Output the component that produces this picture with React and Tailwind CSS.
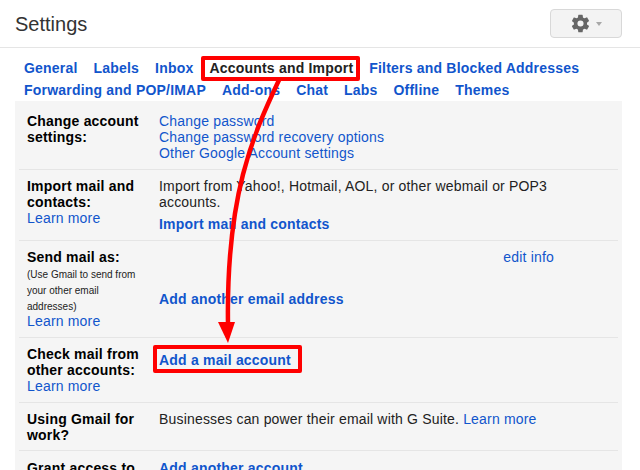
import React from 'react';

const Link = ({ children, className = '' }) => (
  <a className={`text-[#1155cc] tracking-[0.18px] ${className}`}>{children}</a>
);

const Action = ({ children, className = '' }) => (
  <a className={`block font-bold text-[#1155cc] tracking-[0.2px] ${className}`}>{children}</a>
);

const Tab = ({ children, active }) => (
  <a className={`font-bold tracking-[0.2px] ${active ? 'text-[#222222]' : 'text-[#1155cc]'}`}>{children}</a>
);

const Row = ({ label, children, className = '', last }) => (
  <div className={`flex mx-1 px-2 ${last ? '' : 'border-b border-[#e5e5e5]'} ${className}`}>
    <div className="w-[132px] shrink-0 pr-2">{label}</div>
    <div className="flex-1 min-w-0">{children}</div>
  </div>
);

const Label = ({ children }) => (
  <div className="font-bold text-black tracking-[0.2px]">{children}</div>
);

export default function App() {
  return (
    <div className="relative w-[640px] h-[470px] overflow-hidden bg-white text-[14px] leading-4 text-[#222222] font-['Liberation_Sans',Arial,sans-serif]">
      <header className="flex items-center justify-between h-12 pl-[15px] pr-[18px] border-b border-[#e5e5e5]">
        <h1 className="text-[20px] leading-6 font-normal text-[#333333]">Settings</h1>
        <button className="flex items-center justify-center gap-[5px] w-[72px] h-[29px] rounded-sm border border-[#d8d8d8] bg-[#f3f3f3]">
          <svg width="21" height="21" viewBox="0 0 24 24" className="text-[#666666]" fill="currentColor">
            <path fillRule="evenodd" d="M19.4 13c.04-.33.06-.66.06-1s-.02-.67-.06-1l2.1-1.65c.2-.15.25-.42.12-.64l-2-3.46c-.12-.22-.39-.3-.61-.22l-2.49 1a7.3 7.3 0 0 0-1.69-.98l-.38-2.65A.49.49 0 0 0 13.96 2h-4a.49.49 0 0 0-.49.42l-.38 2.65c-.61.25-1.17.59-1.69.98l-2.49-1a.49.49 0 0 0-.61.22l-2 3.46c-.13.22-.07.49.12.64L4.52 11c-.04.33-.07.67-.07 1s.03.67.07 1l-2.11 1.65c-.19.15-.25.42-.12.64l2 3.46c.12.22.39.3.61.22l2.49-1c.52.4 1.08.73 1.69.98l.38 2.65c.03.24.24.42.49.42h4c.25 0 .46-.18.49-.42l.38-2.65c.61-.25 1.17-.59 1.69-.98l2.49 1c.22.08.49 0 .61-.22l2-3.46c.13-.22.07-.49-.12-.64L19.4 13zM12 15.5a3.5 3.5 0 1 1 0-7 3.5 3.5 0 0 1 0 7z" />
          </svg>
          <span className="w-0 h-0 border-x-[3.5px] border-x-transparent border-t-[4px] border-t-[#a8a8a8]" />
        </button>
      </header>

      <nav className="pl-6 pt-[9px]">
        <div className="flex gap-4 h-[22px] items-center">
          <Tab>General</Tab>
          <Tab>Labels</Tab>
          <Tab>Inbox</Tab>
          <Tab active>Accounts and Import</Tab>
          <Tab>Filters and Blocked Addresses</Tab>
        </div>
        <div className="flex gap-4 h-[22px] items-center">
          <Tab>Forwarding and POP/IMAP</Tab>
          <Tab>Add-ons</Tab>
          <Tab>Chat</Tab>
          <Tab>Labs</Tab>
          <Tab>Offline</Tab>
          <Tab>Themes</Tab>
        </div>
      </nav>

      <main className="ml-[15px] w-[607px] bg-[#f5f5f5] h-[400px]">
        <Row className="h-[69px] pt-3" label={<Label>Change account settings:</Label>}>
          <Link className="block">Change password</Link>
          <Link className="block">Change password recovery options</Link>
          <Link className="block">Other Google Account settings</Link>
        </Row>
        <Row
          className="h-[71px] pt-2"
          label={
            <>
              <Label>Import mail and contacts:</Label>
              <Link>Learn more</Link>
            </>
          }
        >
          <p className="tracking-[0.18px] text-[#222222]">Import from Yahoo!, Hotmail, AOL, or other webmail or POP3 accounts.</p>
          <Action className="mt-[6px]">Import mail and contacts</Action>
        </Row>
        <Row
          className="h-[97px] pt-2"
          label={
            <>
              <Label>Send mail as:</Label>
              <p className="mt-[2px] max-w-[115px] text-[10px] leading-4 text-[#222222]">(Use Gmail to send from your other email addresses)</p>
              <Link className="block -mt-[2px]">Learn more</Link>
            </>
          }
        >
          <div className="flex justify-end pr-[56px] h-[42px]">
            <Link>edit info</Link>
          </div>
          <Action>Add another email address</Action>
        </Row>
        <Row
          className="h-[65px] pt-2"
          label={
            <>
              <Label>Check mail from other accounts:</Label>
              <Link>Learn more</Link>
            </>
          }
        >
          <Action className="mt-[6px]">Add a mail account</Action>
        </Row>
        <Row className="h-[48px] pt-2" label={<Label>Using Gmail for work?</Label>}>
          <p className="tracking-[0.18px]">
            Businesses can power their email with G Suite. <Link>Learn more</Link>
          </p>
        </Row>
        <Row className="pt-[9px]" last label={<Label>Grant access to your account:</Label>}>
          <Action>Add another account</Action>
        </Row>
      </main>

      {/* annotation overlay */}
      <div className="absolute left-[201px] top-[56px] w-[159px] h-[25px] border-4 border-[#ff0000] rounded-[2px]" />
      <div className="absolute left-[153px] top-[345px] w-[149px] h-[28px] border-4 border-[#ff0000] rounded-[2px]" />
      <svg className="absolute left-0 top-0 pointer-events-none" width="640" height="470" viewBox="0 0 640 470">
        <path d="M279 80 C253 135 226 195 228 325" fill="none" stroke="#ff0000" strokeWidth="4.5" />
        <path d="M218 322 L235 322 L228 343 Z" fill="#ff0000" />
      </svg>
    </div>
  );
}
